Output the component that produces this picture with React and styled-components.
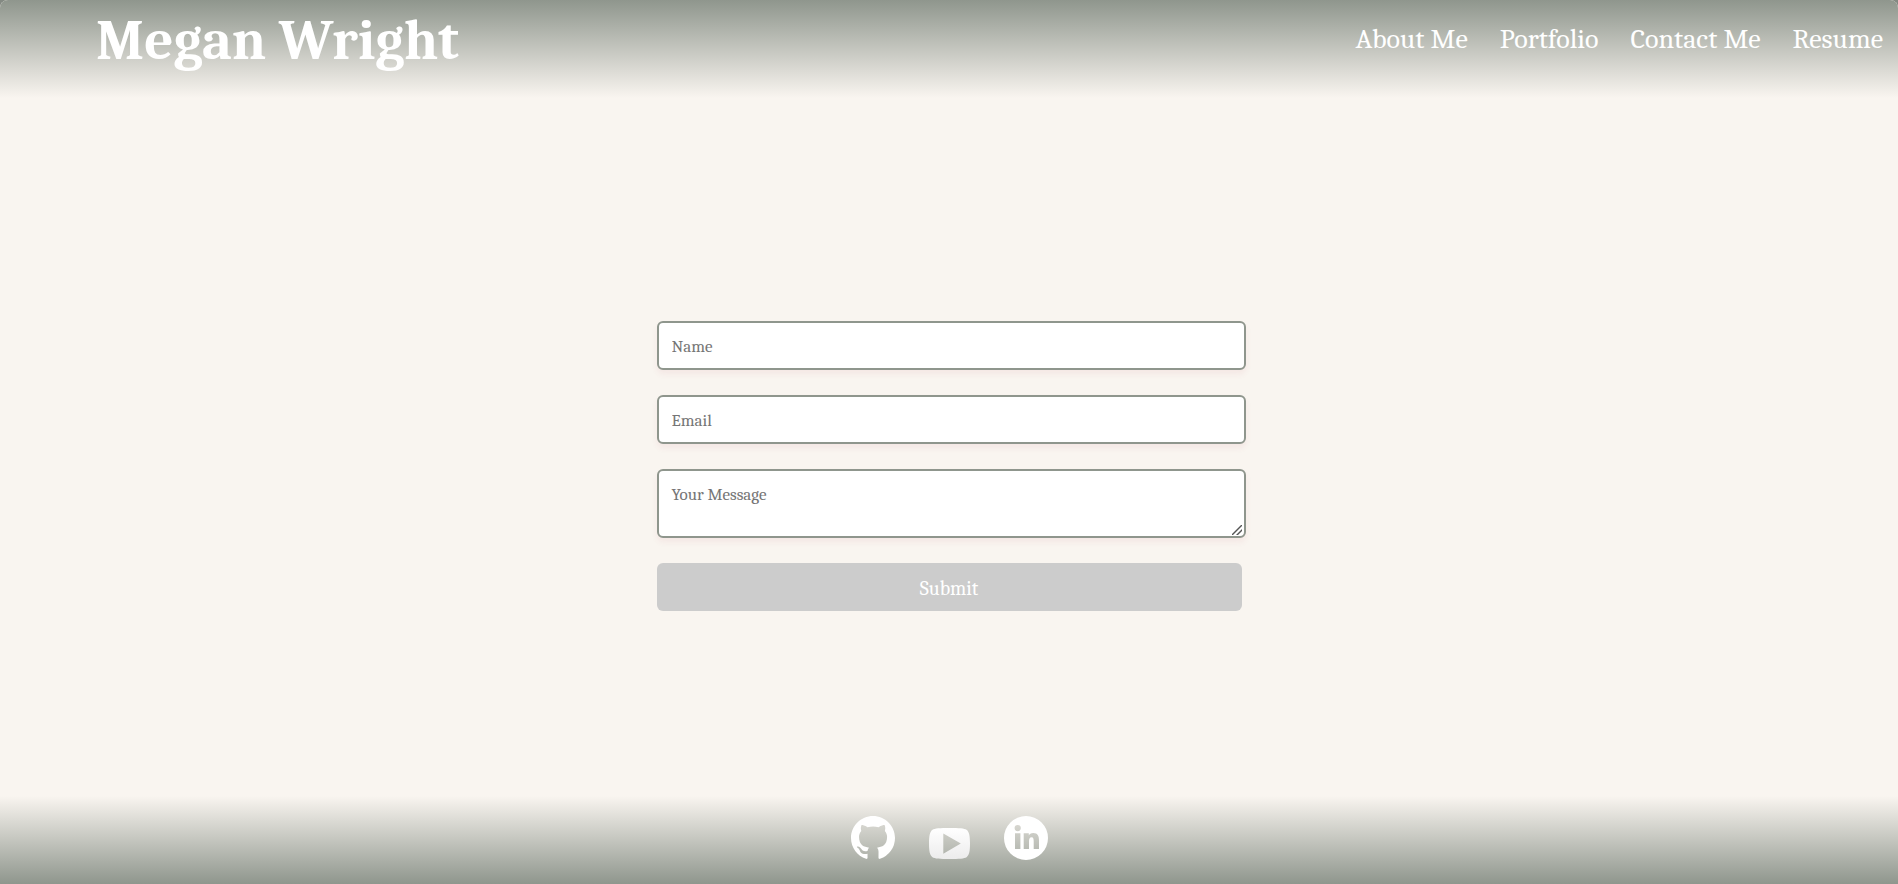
import React from "react";
import styled, { createGlobalStyle, css } from "styled-components";

const sage = "#8f968d";
const cream = "#f9f5f0";
const serif = `Cambria, "Liberation Serif", serif`;

const GlobalStyle = createGlobalStyle`
  *, *::before, *::after { box-sizing: border-box; }
  body { margin: 0; background: #838982; font-family: ${serif}; }
`;

const Page = styled.div`
  min-height: 100vh;
  display: flex;
  flex-direction: column;
  background: ${cream};
  border-radius: 8px 8px 0 0;
`;

const Header = styled.header`
  display: flex;
  align-items: flex-start;
  justify-content: space-between;
  min-height: 98px;
  padding: 9px 15px 0 96px;
  border-radius: 8px 8px 0 0;
  background: linear-gradient(${sage}, ${cream});
  color: #fff;
`;

const Title = styled.h1`
  margin: 0;
  font-size: 57px;
  line-height: 64px;
  font-weight: 700;
`;

const Nav = styled.nav`
  display: flex;
  gap: 32px;
  padding-top: 14px;
`;

const NavLink = styled.a`
  color: #fff;
  font-size: 28px;
  line-height: 32px;
  text-decoration: none;
`;

const Main = styled.main`
  flex: 1;
  display: flex;
  justify-content: center;
  align-items: center;
  padding: 0 20px;
`;

const Form = styled.form`
  display: flex;
  flex-direction: column;
  gap: 25px;
  width: 100%;
  max-width: 585px;
  margin-top: 38px;
`;

const fieldStyle = css`
  display: block;
  width: calc(100% + 4px);
  margin: 0;
  padding: 14px 13px 12px;
  border: 2px solid ${sage};
  border-radius: 6px;
  background: #fff;
  box-shadow: 0 4px 6px rgba(190, 60, 80, 0.07);
  font-family: ${serif};
  font-size: 17px;
  line-height: 20px;
  &::placeholder { color: #757575; }
`;

const Field = styled.input`
  ${fieldStyle}
  height: 49px;
`;

const Message = styled.textarea`
  ${fieldStyle}
  height: 69px;
  resize: both;
  &::-webkit-resizer {
    background: linear-gradient(
        135deg,
        transparent 44%,
        #555 46%,
        #555 54%,
        transparent 56%,
        transparent 69%,
        #555 71%,
        #555 79%,
        transparent 81%
      )
      3px 4px / 10px 10px no-repeat;
  }
`;

const Submit = styled.button`
  height: 48px;
  padding: 2px 0 0;
  border: 0;
  border-radius: 6px;
  background: #ccc;
  color: #fff;
  font-family: ${serif};
  font-size: 20px;
`;

const Footer = styled.footer`
  display: flex;
  justify-content: center;
  align-items: flex-end;
  gap: 34px;
  padding: 20px 0 24px;
  background: linear-gradient(${cream}, ${sage});
`;

const IconLink = styled.a`
  display: block;
  color: #fff;
  svg { display: block; }
`;

const links = ["About Me", "Portfolio", "Contact Me", "Resume"];

const GithubIcon = () => (
  <svg width="44" height="44" viewBox="0 0 16 16" fill="currentColor" aria-hidden="true">
    <path d="M8 0C3.58 0 0 3.58 0 8c0 3.54 2.29 6.53 5.47 7.59.4.07.55-.17.55-.38 0-.19-.01-.82-.01-1.49-2.01.37-2.53-.49-2.69-.94-.09-.23-.48-.94-.82-1.13-.28-.15-.68-.52-.01-.53.63-.01 1.08.58 1.23.82.72 1.21 1.87.87 2.33.66.07-.52.28-.87.51-1.07-1.78-.2-3.64-.89-3.64-3.95 0-.87.31-1.59.82-2.15-.08-.2-.36-1.02.08-2.12 0 0 .67-.21 2.2.82.64-.18 1.32-.27 2-.27s1.36.09 2 .27c1.53-1.04 2.2-.82 2.2-.82.44 1.1.16 1.92.08 2.12.51.56.82 1.27.82 2.15 0 3.07-1.87 3.75-3.65 3.95.29.25.54.73.54 1.48 0 1.07-.01 1.93-.01 2.2 0 .21.15.46.55.38A8.01 8.01 0 0 0 16 8c0-4.42-3.58-8-8-8Z" />
  </svg>
);

const YoutubeIcon = () => (
  <svg width="41" height="32" viewBox="0 0 41 32" aria-hidden="true">
    <defs>
      <linearGradient id="tube" x1="0" y1="0" x2="0" y2="1">
        <stop offset="0" stopColor="#fff" />
        <stop offset="1" stopColor="#ececec" />
      </linearGradient>
    </defs>
    <path
      fill="url(#tube)"
      fillRule="evenodd"
      d="M20.500 0C30 0 35.500.4 37.500 1.800C40.200 3.700 41 8 41 15.500C41 23 40.200 27.300 37.500 29.200C35.500 30.600 30 31 20.500 31C11 31 5.500 30.600 3.500 29.200C.8 27.300 0 23 0 15.500C0 8 .8 3.700 3.500 1.800C5.500.4 11 0 20.500 0ZM14.300 5.400V25.700L31.800 15.500Z"
    />
  </svg>
);

const LinkedinIcon = () => (
  <svg width="44" height="44" viewBox="0 0 44 44" fill="currentColor" aria-hidden="true">
    <path
      fillRule="evenodd"
      d="M22 0A22 22 0 1 1 22 44A22 22 0 1 1 22 0ZM13.700 9A3.100 3.100 0 1 0 13.700 15.200A3.100 3.100 0 1 0 13.700 9ZM11 17.300V33H16.400V17.300ZM19.700 17.300V33H25V25.200C25 23.100 25.500 21.300 27.600 21.300C29.500 21.300 29.700 23.200 29.700 25.300V33H35V24.400C35 20.200 34 16.900 29.200 16.900C26.900 16.900 25.400 18.100 24.800 19.400V17.300Z"
    />
  </svg>
);

export default function App() {
  return (
    <>
      <GlobalStyle />
      <Page>
        <Header>
          <Title>Megan Wright</Title>
          <Nav>
            {links.map((label) => (
              <NavLink key={label} href={`#${label.toLowerCase().replace(" ", "-")}`}>
                {label}
              </NavLink>
            ))}
          </Nav>
        </Header>
        <Main>
          <Form onSubmit={(event) => event.preventDefault()}>
            <Field type="text" name="name" placeholder="Name" aria-label="Name" />
            <Field type="email" name="email" placeholder="Email" aria-label="Email" />
            <Message name="message" placeholder="Your Message" aria-label="Your Message" />
            <Submit type="submit">Submit</Submit>
          </Form>
        </Main>
        <Footer>
          <IconLink href="#github" aria-label="GitHub"><GithubIcon /></IconLink>
          <IconLink href="#youtube" aria-label="YouTube"><YoutubeIcon /></IconLink>
          <IconLink href="#linkedin" aria-label="LinkedIn"><LinkedinIcon /></IconLink>
        </Footer>
      </Page>
    </>
  );
}
